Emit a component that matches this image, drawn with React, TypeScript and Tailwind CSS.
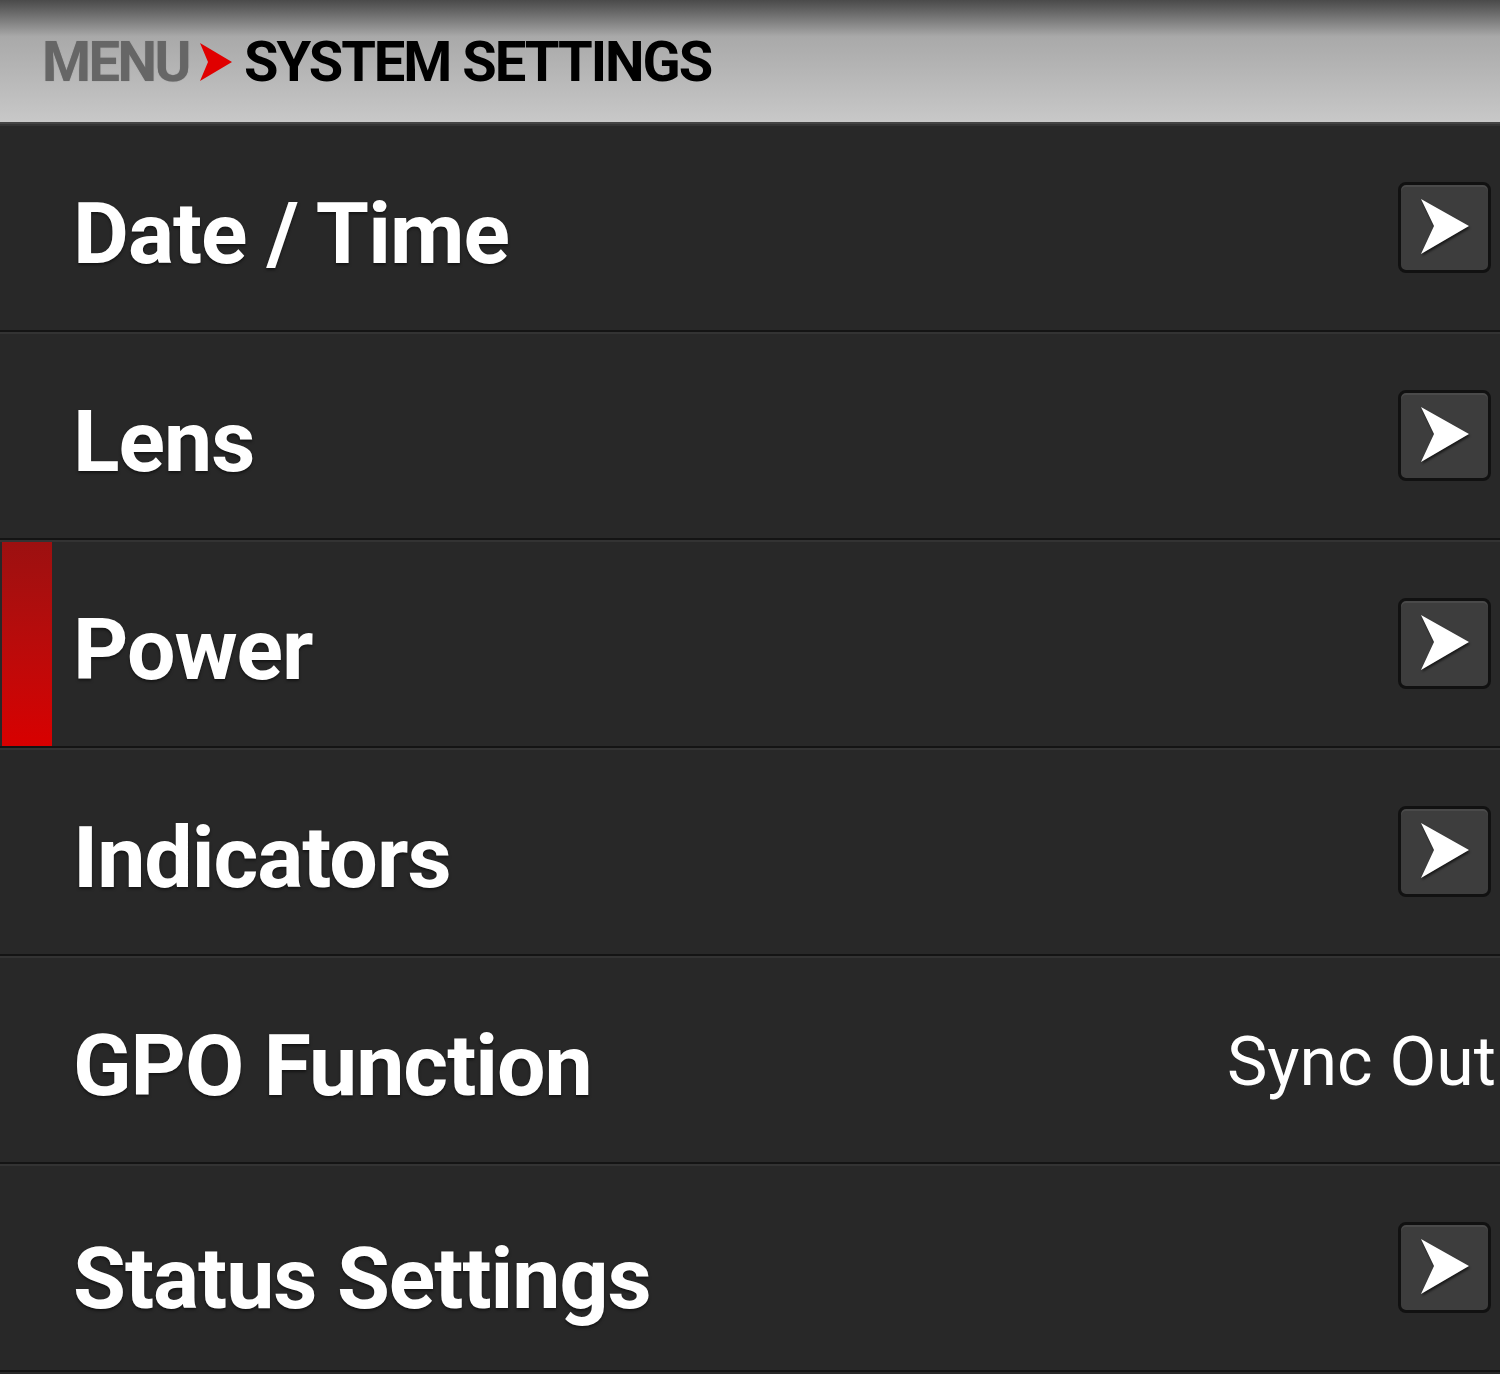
import React from 'react';

type Row = { label: string; value?: string; active?: boolean; last?: boolean };

const rows: Row[] = [
  { label: 'Date / Time' },
  { label: 'Lens' },
  { label: 'Power', active: true },
  { label: 'Indicators' },
  { label: 'GPO Function', value: 'Sync Out' },
  { label: 'Status Settings', last: true },
];

const ArrowButton: React.FC = () => (
  <div className="w-[93px] h-[91px] rounded-[8px] border-[3px] border-[#111] bg-[#3d3d3d] shadow-[inset_0_2px_0_#4a4a4a] flex items-center justify-center">
    <svg width="52" height="58" viewBox="0 0 52 58" className="drop-shadow-[1px_2px_1px_rgba(0,0,0,0.6)]">
      <path d="M2 1 L50 28 L2 56 L15 28 Z" fill="#ffffff" />
    </svg>
  </div>
);

const MenuRow: React.FC<Row> = ({ label, value, active, last }) => (
  <div className="h-[208px] flex items-stretch bg-[#282828] border-t-2 border-t-[#333] border-b-2 border-b-[#141414]">
    <div
      className={
        active
          ? 'w-[50px] ml-[2px] bg-gradient-to-b from-[#9c1010] to-[#d80000]'
          : 'w-[52px]'
      }
    />
    <div className="flex-1 flex items-center justify-between pl-[21px] pr-[9px]">
      <span
        className={
          "font-['Roboto'] font-bold text-[86px] leading-none text-white tracking-[-1px] [text-shadow:0_2px_3px_rgba(0,0,0,0.5)] " +
          (last ? 'mt-[22px]' : 'mt-[12px]')
        }
      >
        {label}
      </span>
      {value ? (
        <span className="font-['Roboto'] font-normal text-[68px] leading-none text-white mr-[-5px] mt-[4px]">
          {value}
        </span>
      ) : (
        <div className="mb-[2px]">
          <ArrowButton />
        </div>
      )}
    </div>
  </div>
);

export default function App() {
  return (
    <div className="w-[1500px] h-[1374px] overflow-hidden bg-[#282828]">
      <div className="h-[124px] flex items-center pl-[42px] pt-[2px] bg-gradient-to-b from-[#4a4a4a] via-[#a9a9a9] via-[30%] to-[#c8c8c8] border-b-2 border-b-[#444]">
        <span className="font-['Roboto'] font-bold text-[56px] leading-none text-[#666] tracking-[-2.5px] [text-shadow:0_0_1px_#888]">
          MENU
        </span>
        <svg width="34" height="40" viewBox="0 0 34 40" className="ml-[10px] mr-[11px]">
          <path d="M1 1 L33 20 L1 39 L9 20 Z" fill="#e00000" />
        </svg>
        <span className="font-['Roboto'] font-bold text-[56px] leading-none text-black tracking-[-2px]">
          SYSTEM SETTINGS
        </span>
      </div>
      {rows.map((r) => (
        <MenuRow key={r.label} {...r} />
      ))}
    </div>
  );
}
